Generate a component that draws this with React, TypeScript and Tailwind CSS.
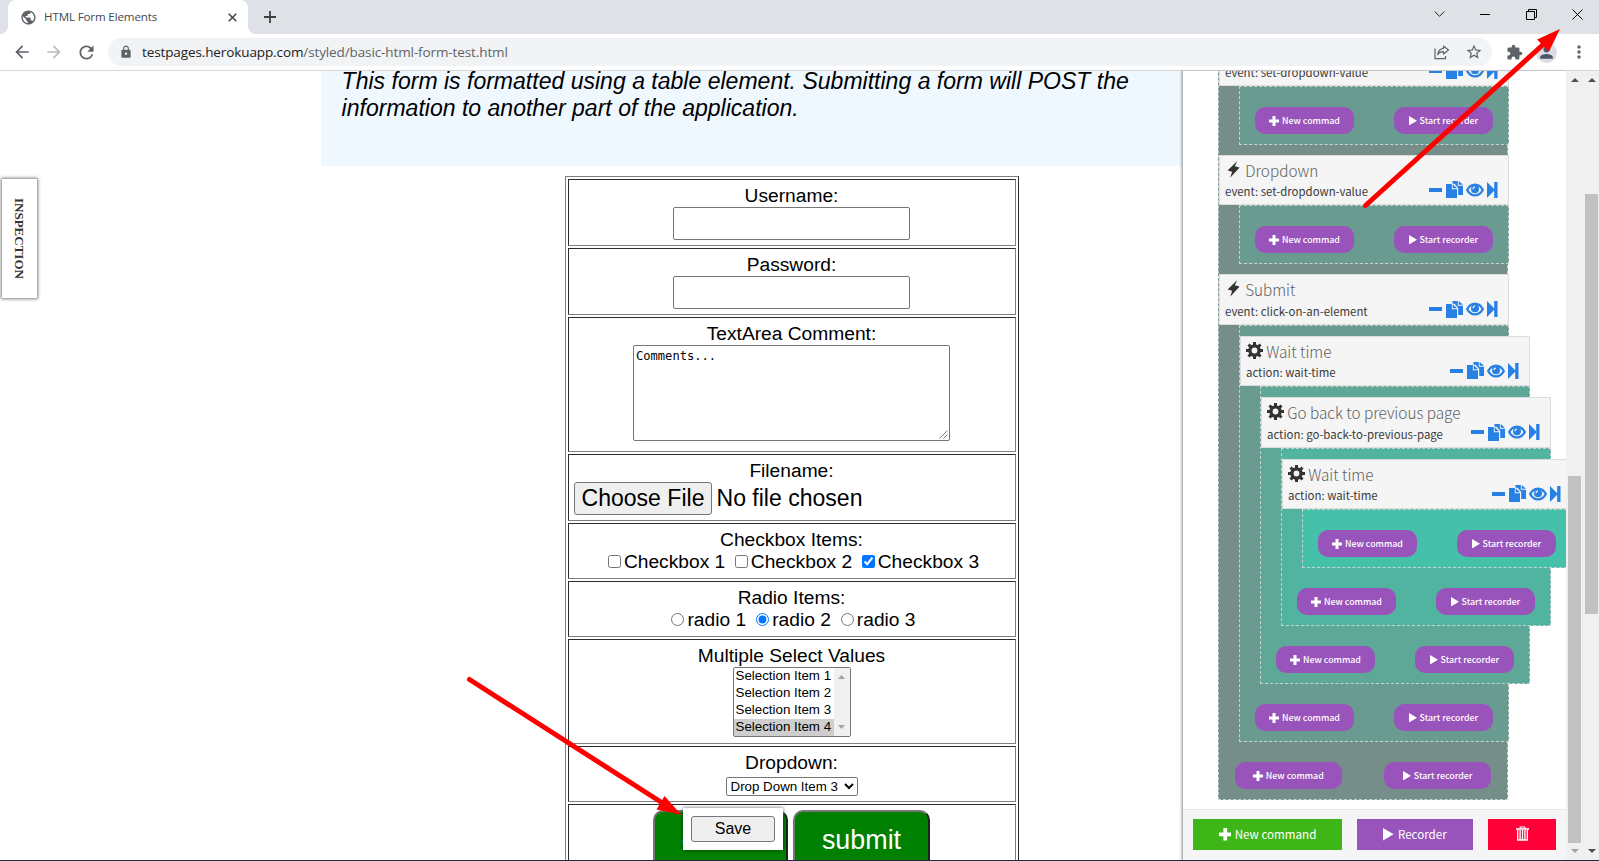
import type { ReactNode } from "react";
import { MdArrowBack, MdArrowForward, MdExtension, MdLock, MdMoreVert, MdPerson, MdPublic, MdRefresh, MdStarOutline } from "react-icons/md";

/* ---------- icons ---------- */

const ShareIcon = () => (
  <svg width="16" height="15" viewBox="0 0 16 15" fill="none" stroke="#5f6368" strokeWidth="1.2">
    <path d="M1 3.500V13.600h10.500V11" />
    <path d="M9.500 1l5 4-5 4V6.700C6.700 6.700 4.900 7.600 3.700 9.800 4 6.300 6.200 3.700 9.500 3.300z" strokeLinejoin="round" />
  </svg>
);

const Bolt = () => (
  <svg width="13" height="17" viewBox="0 0 13 17" className="shrink-0">
    <path d="M10.200 0L.6 9.600l4.500 1.200L3.200 16.800 12.600 6.500 7.800 5.200z" fill="#333" />
  </svg>
);

const Gear = () => (
  <svg width="17" height="17" viewBox="-8.500 -8.500 17 17" className="shrink-0">
    <circle r="4.600" fill="none" stroke="#333" strokeWidth="3.400" />
    {[0, 45, 90, 135, 180, 225, 270, 315].map((a) => (
      <rect key={a} x="-1.500" y="-8.500" width="3" height="3.600" fill="#333" transform={`rotate(${a})`} />
    ))}
  </svg>
);

const Actions = () => (
  <div className="mb-[3px] flex items-center">
    <span className="block h-[4px] w-[13px] bg-[#2780e3]" />
    <svg width="17" height="17" viewBox="0 0 17 17" className="ml-1" fill="#2780e3">
      <path d="M0 3h5.800v5.200H11V17H0z" />
      <path d="M6.700 3.200L11 7.300H6.700z" />
      <path d="M6.500 0h5.300v4.700H17.200V14h-5V6.900L8.600 2.800H6.500z" />
      <path d="M12.700 0l4.400 3.800h-4.400z" />
    </svg>
    <svg width="18" height="14" viewBox="0 0 18 14" className="ml-[3px]">
      <path d="M1.200 7C3 3.500 5.800 1.600 9 1.600S15 3.500 16.800 7C15 10.500 12.200 12.400 9 12.400S3 10.500 1.200 7z" fill="none" stroke="#2780e3" strokeWidth="2.300" />
      <circle cx="9" cy="6.300" r="4" fill="#2780e3" />
      <path d="M7 6.200A2 2 0 0 1 9 4.200" fill="none" stroke="#f5f5f5" strokeWidth="1.200" />
    </svg>
    <svg width="11" height="16" viewBox="0 0 11 16" className="ml-[3px]" fill="#2780e3">
      <path d="M0 0l7.200 7.200V0h3.300v16H7.200V8.800L0 16z" />
    </svg>
  </div>
);

const Plus = ({ size }: { size: number }) => (
  <svg width={size} height={size} viewBox="0 0 10 10" fill="#fff" className="shrink-0">
    <path d="M3.500 0h3v3.500H10v3H6.500V10h-3V6.500H0v-3h3.500z" />
  </svg>
);

const Play = ({ size }: { size: number }) => (
  <svg width={size * 0.85} height={size} viewBox="0 0 8.500 10" fill="#fff" className="shrink-0">
    <path d="M0 0l8.500 5L0 10z" />
  </svg>
);

const Trash = () => (
  <svg width="13" height="15" viewBox="0 0 13 15" fill="none" stroke="#fff">
    <path d="M0 3h13" strokeWidth="1.600" />
    <path d="M4.200 2.500V1h4.600v1.500" strokeWidth="1.200" />
    <path d="M1.700 4v10h9.600V4M4.100 4v10M6.500 4v10M8.900 4v10" strokeWidth="1.300" />
  </svg>
);

/* ---------- browser chrome ---------- */

function TabStrip() {
  return (
    <div className="flex h-[34px] shrink-0 font-['Open_Sans',sans-serif]">
      <div className="w-2 rounded-br-lg bg-[#dee1e6]" />
      <div className="w-[240px] bg-[linear-gradient(#dee1e6_50%,#fff_50%)]">
        <div className="flex h-full items-center rounded-t-lg bg-white pr-[11px] pl-[11.500px]">
          <MdPublic size={17} className="shrink-0 text-[#5f6368]" />
          <span className="ml-[7.500px] flex-1 text-[11.600px] tracking-[-0.150px] whitespace-nowrap text-[#45494d]">HTML Form Elements</span>
          <svg width="9" height="9" viewBox="0 0 9 9" stroke="#45494d" strokeWidth="1.600">
            <path d="M.7.7l7.600 7.600M8.300.7L.7 8.300" />
          </svg>
        </div>
      </div>
      <div className="flex flex-1 items-center rounded-bl-lg bg-[#dee1e6] pr-[16px] pl-4">
        <svg width="12" height="12" viewBox="0 0 12 12" stroke="#3c4043" strokeWidth="1.800">
          <path d="M6 0v12M0 6h12" />
        </svg>
        <div className="mb-[6px] ml-auto flex items-center">
          <svg width="11" height="6" viewBox="0 0 11 6" fill="none" stroke="#222">
            <path d="M.7.5l4.800 4.800L10.300.5" />
          </svg>
          <span className="ml-[35px] block h-px w-[10px] bg-black" />
          <svg width="11" height="11" viewBox="0 0 11 11" fill="none" stroke="#000" className="ml-[36px]">
            <path d="M.5 2.500h8v8h-8zM2.500 2.500v-2h8v8h-2" />
          </svg>
          <svg width="11" height="11" viewBox="0 0 11 11" stroke="#000" strokeWidth="1" className="ml-[35px]">
            <path d="M.5.5l10 10M10.500.5l-10 10" />
          </svg>
        </div>
      </div>
    </div>
  );
}

function Toolbar() {
  return (
    <div className="flex h-[37px] shrink-0 items-center border-b border-[#d5d6d8] bg-white pr-[10px] pl-[12px] font-['Open_Sans',sans-serif] text-[#5f6368]">
      <MdArrowBack size={20} />
      <MdArrowForward size={20} className="ml-[12px] text-[#babcbe]" />
      <MdRefresh size={21} className="ml-[12px]" />
      <div className="ml-[11px] flex h-7 w-[1384px] items-center rounded-full bg-[#f1f3f4] pr-[9px] pl-[11px]">
        <MdLock size={14} />
        <span className="ml-[9px] flex-1 text-[13.500px] tracking-[-0.110px] whitespace-nowrap">
          <span className="text-[#202124]">testpages.herokuapp.com</span>/styled/basic-html-form-test.html
        </span>
        <ShareIcon />
        <MdStarOutline size={18} className="ml-[15px]" />
      </div>
      <MdExtension size={17} className="ml-[14px]" />
      <span className="ml-[13px] flex size-[21px] items-center justify-center rounded-full bg-[#dadde3] text-[#4d566b]">
        <MdPerson size={19} />
      </span>
      <MdMoreVert size={20} className="ml-auto" />
    </div>
  );
}

/* ---------- form page ---------- */

function Cell({ label, className, children }: { label?: string; className: string; children?: ReactNode }) {
  return (
    <div className={`flex shrink-0 flex-col items-center border border-t-[#2c2c2c] border-r-[#808080] border-b-[#808080] border-l-[#2c2c2c] py-[5px] pr-[6px] pl-[5px] ${className}`}>
      {label && <div className="h-[22px] text-[19.200px] leading-[22px] whitespace-nowrap">{label}</div>}
      {children}
    </div>
  );
}

function Choice({ type, label, checked }: { type: "checkbox" | "radio"; label: string; checked?: boolean }) {
  return (
    <label className="flex h-[21px] items-center text-[19.200px] leading-[21px] whitespace-nowrap">
      <input type={type} defaultChecked={checked} className="mr-[3px] ml-1 size-[13px]" />
      {label}
    </label>
  );
}

const BEVEL = "border-2 border-t-[#767676] border-l-[#767676] border-r-[#212121] border-b-[#212121]";

function FormPage() {
  return (
    <main className="flex w-[1182px] shrink-0 flex-col overflow-hidden font-['Liberation_Sans',Arial,sans-serif] text-black">
      <div className="ml-[321px] h-[95px] shrink-0 bg-[#eff7ff] pl-[20.600px]">
        <p className="-mt-[3px] text-[23.040px] leading-[27px] whitespace-nowrap italic">
          This form is formatted using a table element. Submitting a form will POST the
          <br />
          information to another part of the application.
        </p>
      </div>
      <div className="mt-[10px] ml-[565px] flex w-[454px] shrink-0 flex-col gap-[2px] border border-t-[#808080] border-r-[#2c2c2c] border-b-[#2c2c2c] border-l-[#808080] p-[2px]">
        <Cell label="Username:" className="h-[67px]">
          <div className="h-[33px] w-[237px] rounded-[2px] border border-[#767676]" />
        </Cell>
        <Cell label="Password:" className="h-[67px]">
          <div className="h-[33px] w-[237px] rounded-[2px] border border-[#767676]" />
        </Cell>
        <Cell label="TextArea Comment:" className="h-[135px]">
          <div className="flex h-[96px] w-[317px] flex-col justify-between rounded-[2px] border border-[#767676] py-[1px] pr-[1px] pl-[2px]">
            <span className="mt-[2px] font-['DejaVu_Sans_Mono',monospace] text-[12.100px] leading-[15px]">Comments...</span>
            <svg width="9" height="9" viewBox="0 0 9 9" stroke="#555" strokeWidth=".8" className="self-end">
              <path d="M.5 8.500l8-8M4.500 8.500l4-4" />
            </svg>
          </div>
        </Cell>
        <Cell label="Filename:" className="h-[67px]">
          <div className="flex h-[33px] w-full items-center text-[23.040px] whitespace-nowrap">
            <span className="flex h-[33px] w-[138px] items-center justify-center rounded-[3px] border border-[#767676] bg-[#efefef]">Choose File</span>
            <span className="ml-[4.500px]">No file chosen</span>
          </div>
        </Cell>
        <Cell label="Checkbox Items:" className="h-[56px]">
          <div className="flex gap-[5.600px]">
            <Choice type="checkbox" label="Checkbox 1" />
            <Choice type="checkbox" label="Checkbox 2" />
            <Choice type="checkbox" label="Checkbox 3" checked />
          </div>
        </Cell>
        <Cell label="Radio Items:" className="h-[56px]">
          <div className="flex gap-[6px]">
            <Choice type="radio" label="radio 1" />
            <Choice type="radio" label="radio 2" checked />
            <Choice type="radio" label="radio 3" />
          </div>
        </Cell>
        <Cell label="Multiple Select Values" className="h-[105px]">
          <div className="flex h-[70px] w-[118px] rounded-[2px] border border-[#767676]">
            <div className="flex-1 text-[13.333px] leading-[15px] whitespace-nowrap">
              <div className="pb-[2px] pl-[2px]">Selection Item 1</div>
              <div className="pb-[2px] pl-[2px]">Selection Item 2</div>
              <div className="pb-[2px] pl-[2px]">Selection Item 3</div>
              <div className="bg-[#cecece] pb-[2px] pl-[2px]">Selection Item 4</div>
            </div>
            <div className="flex w-[16px] flex-col items-center justify-between bg-[#f0f0f0] py-[7px]">
              <svg width="7" height="4" viewBox="0 0 7 4" fill="#a3a3a3"><path d="M3.500 0L7 4H0z" /></svg>
              <svg width="7" height="4" viewBox="0 0 7 4" fill="#a3a3a3"><path d="M3.500 4L7 0H0z" /></svg>
            </div>
          </div>
        </Cell>
        <Cell label="Dropdown:" className="h-[56px]">
          <div className="mt-[3px] flex h-[19px] w-[132px] items-center justify-between rounded-[2px] border border-[#767676] pr-[3px] pl-[4px] text-[13.333px] leading-[17px] whitespace-nowrap">
            Drop Down Item 3
            <svg width="10" height="7" viewBox="0 0 10 7" fill="none" stroke="#000" strokeWidth="2">
              <path d="M1 1l4 4 4-4" />
            </svg>
          </div>
        </Cell>
        <Cell className="h-[70px]">
          <div className="flex gap-[5px] text-[26.880px] text-white">
            <span className={`flex h-[60px] w-[135px] items-center justify-center rounded-[10px] bg-[#008000] ${BEVEL}`}>cancel</span>
            <span className={`flex h-[60px] w-[137px] items-center justify-center rounded-[10px] bg-[#008000] ${BEVEL}`}>submit</span>
          </div>
        </Cell>
      </div>
    </main>
  );
}

/* ---------- recorder side panel ---------- */

type Node = { title: string; sub: string; kind: "event" | "action"; tall?: boolean; children?: Node[] };

const TREE: Node[] = [
  { title: "Dropdown", sub: "event: set-dropdown-value", kind: "event" },
  { title: "Dropdown", sub: "event: set-dropdown-value", kind: "event" },
  {
    title: "Submit",
    sub: "event: click-on-an-element",
    kind: "event",
    tall: true,
    children: [
      {
        title: "Wait time",
        sub: "action: wait-time",
        kind: "action",
        children: [
          {
            title: "Go back to previous page",
            sub: "action: go-back-to-previous-page",
            kind: "action",
            tall: true,
            children: [{ title: "Wait time", sub: "action: wait-time", kind: "action" }],
          },
        ],
      },
    ],
  },
];

const LEVEL_BG = ["bg-[#768e89]", "bg-[#6a9b90]", "bg-[#5ea898]", "bg-[#51b4a0]", "bg-[#45c1a9]"];

function Header({ node }: { node: Node }) {
  return (
    <div className={`mt-[10px] w-[290px] border border-[#dcdcdc] bg-[#f5f5f5] pt-[2px] pr-[10px] pl-[5px] ${node.tall ? "h-[51px]" : "h-[50px]"}`}>
      <div className="flex h-6 items-center">
        <span className="flex items-center pb-[2px]">
          {node.kind === "event" ? <span className="ml-[2px] flex w-[18.200px]"><Bolt /></span> : <span className="flex w-[20.200px]"><Gear /></span>}
        </span>
        <span className="text-[15.300px] leading-6 font-light whitespace-nowrap text-[#606060]">{node.title}</span>
      </div>
      <div className={`flex h-4 items-center justify-between ${node.tall ? "mt-[1.500px]" : "mt-px"}`}>
        <span className="text-[11.420px] leading-4 whitespace-nowrap text-[#3a3a3a]">{node.sub}</span>
        <Actions />
      </div>
    </div>
  );
}

const PILL = "flex h-[27px] w-[41.700%] items-center justify-center rounded-[10px] bg-[#9954bb] text-[8.850px] leading-[27px] font-medium whitespace-nowrap text-white";

function Block({ nodes, level }: { nodes: Node[]; level: number }) {
  return (
    <div className={`shrink-0 border border-dashed border-[#ccd2d0] ${level ? "ml-5 w-[270px]" : "w-[290px]"} ${LEVEL_BG[level]}`}>
      {nodes.map((n, i) => (
        <div key={i}>
          <Header node={n} />
          <Block nodes={n.children ?? []} level={level + 1} />
        </div>
      ))}
      <div className="mt-5 mb-[10px] flex justify-between px-[5.600%]">
        <span className={`${PILL} gap-[2.700px]`}><Plus size={10} />New commad</span>
        <span className={`${PILL} gap-[3px]`}><Play size={9.5} />Start recorder</span>
      </div>
    </div>
  );
}

function SidePanel() {
  return (
    <aside className="flex w-[384px] shrink-0 flex-col border-l border-[#b4b4b4] bg-white font-['Noto_Sans_CJK_SC',sans-serif] shadow-[-1px_0_2px_rgba(0,0,0,0.25)]">
      <div className="flex h-[738px] shrink-0 flex-col justify-end overflow-hidden pb-[9px] pl-[35px]">
        <Block nodes={TREE} level={0} />
      </div>
      <div className="flex flex-1 items-start gap-[15px] border-t border-[#e7e7e7] bg-[#f5f5f5] pt-[9px] pl-[10px] text-[11.600px] text-white">
        <span className="flex h-[31px] w-[149px] items-center justify-center gap-[3.500px] bg-[#3fb618] whitespace-nowrap"><Plus size={12.5} />New command</span>
        <span className="flex h-[31px] w-[116px] items-center justify-center gap-1 bg-[#9954bb] whitespace-nowrap"><Play size={12.5} />Recorder</span>
        <span className="flex h-[31px] w-[68px] items-center justify-center bg-[#ff0039] pb-[3px]"><Trash /></span>
      </div>
    </aside>
  );
}

function Scrollbar({ thumb, downColor }: { thumb: string; downColor: string }) {
  return (
    <div className="flex w-[17px] shrink-0 flex-col items-center justify-between bg-[#f0f0f0] pt-[7px] pb-[7px]">
      <svg width="8" height="4" viewBox="0 0 8 4" fill="#505050"><path d="M4 0l4 4H0z" /></svg>
      <div className="flex w-[13px] flex-1 flex-col">
        <div className={`bg-[#c1c1c1] ${thumb}`} />
      </div>
      <svg width="8" height="4" viewBox="0 0 8 4" fill={downColor}><path d="M4 4l4-4H0z" /></svg>
    </div>
  );
}

/* ---------- page ---------- */

export default function App() {
  return (
    <div className="relative flex h-[861px] w-[1599px] flex-col overflow-hidden bg-white">
      <TabStrip />
      <Toolbar />
      <div className="flex h-[789px] shrink-0">
        <FormPage />
        <SidePanel />
        <Scrollbar thumb="mt-[394px] h-[367px]" downColor="#a3a3a3" />
        <Scrollbar thumb="mt-[112px] h-[420px]" downColor="#505050" />
      </div>
      <div className="h-px bg-[#1f2c3a]" />

      <div className="absolute top-[179px] left-[2px] flex h-[119px] w-[35px] items-center justify-center bg-white shadow-[0_0_3px_1px_rgba(0,0,0,0.5)]">
        <span className="font-['Liberation_Serif',serif] text-[13px] font-bold text-[#333] [writing-mode:vertical-rl]">INSPECTION</span>
      </div>

      <div className="absolute top-[808px] left-[683px] flex h-[42px] w-[100px] items-center justify-center bg-white shadow-[0_0_4px_rgba(0,0,0,0.6)]">
        <span className="flex h-[26px] w-[84px] items-center justify-center rounded-[3px] border border-[#767676] bg-[#efefef] font-['Liberation_Sans',Arial,sans-serif] text-[16px] text-black">Save</span>
      </div>

      <svg className="pointer-events-none absolute inset-0" width="1599" height="861" viewBox="0 0 1599 861" fill="#f00" stroke="#f00">
        <path d="M469.500 679.500L664 804" strokeWidth="5" strokeLinecap="round" />
        <path d="M681.500 815L656.500 809.500 664.500 796z" stroke="none" />
        <path d="M1365.500 205.500L1546 42" strokeWidth="5" strokeLinecap="round" />
        <path d="M1560 29L1549 51.500 1537 39.500z" stroke="none" />
      </svg>
    </div>
  );
}
